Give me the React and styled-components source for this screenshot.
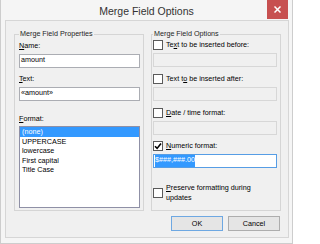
import React from 'react';
import styled, { createGlobalStyle } from 'styled-components';

const formats = ['(none)', 'UPPERCASE', 'lowercase', 'First capital', 'Title Case'];

const App = () => (
    <>
        <GlobalStyle />
        <Window>
            <TitleBar>
                <span />
                <Title>Merge Field Options</Title>
                <CloseButton aria-label="Close">
                    <svg width="7" height="7" viewBox="0 0 7 7">
                        <path d="M1 1 L6 6 M6 1 L1 6" stroke="#fff" strokeWidth="1.5" strokeLinecap="square" />
                    </svg>
                </CloseButton>
            </TitleBar>
            <Client>
                <Columns>
                    <Group $padLeft={4} $padRight={3}>
                        <Legend>Merge Field Properties</Legend>
                        <Stack>
                            <FieldLabel $top={3}><u>N</u>ame:</FieldLabel>
                            <TextBox $top={4}>amount</TextBox>
                            <FieldLabel $top={6}><u>T</u>ext:</FieldLabel>
                            <TextBox $top={4}>«amount»</TextBox>
                            <FieldLabel $top={13}><u>F</u>ormat:</FieldLabel>
                            <ListBox>
                                {formats.map((item, i) => (
                                    <ListItem key={item} $selected={i === 0}>{item}</ListItem>
                                ))}
                            </ListBox>
                        </Stack>
                    </Group>
                    <Group $padLeft={1} $padRight={3}>
                        <Legend>Merge Field Options</Legend>
                        <Stack>
                            <CheckRow $top={2}>
                                <CheckBox />
                                <span>Te<u>x</u>t to be inserted before:</span>
                            </CheckRow>
                            <TextBox $top={3} $disabled />
                            <CheckRow $top={7}>
                                <CheckBox />
                                <span>Text t<u>o</u> be inserted after:</span>
                            </CheckRow>
                            <TextBox $top={3} $disabled />
                            <CheckRow $top={7}>
                                <CheckBox />
                                <span><u>D</u>ate / time format:</span>
                            </CheckRow>
                            <TextBox $top={3} $disabled />
                            <CheckRow $top={6}>
                                <CheckBox>
                                    <svg width="8" height="8" viewBox="0 0 8 8">
                                        <path d="M1 4.2 L3.1 6.4 L7 1.4" fill="none" stroke="#000" strokeWidth="1.6" />
                                    </svg>
                                </CheckBox>
                                <span><u>N</u>umeric format:</span>
                            </CheckRow>
                            <TextBox $top={3} $focused>
                                <Selection>$###,###.00</Selection>
                            </TextBox>
                            <CheckRow $top={15}>
                                <CheckBox />
                                <WrapLabel><u>P</u>reserve formatting during<br />updates</WrapLabel>
                            </CheckRow>
                        </Stack>
                    </Group>
                </Columns>
                <Buttons>
                    <Button $default>OK</Button>
                    <Button>Cancel</Button>
                </Buttons>
            </Client>
        </Window>
    </>
);

export default App;

// Styled components
const GlobalStyle = createGlobalStyle`
    html, body {
        margin: 0;
        padding: 0;
        background: #ffffff;
    }
    body {
        font-family: "Liberation Sans", Arial, sans-serif;
    }
    u {
        text-decoration-thickness: 1px;
        text-underline-offset: 1px;
    }
`;

const Window = styled.div`
    box-sizing: border-box;
    width: 293px;
    height: 244px;
    background: #f5f5f5;
    border: 1px solid #cdcdcd;
    border-top: none;
    display: flex;
    flex-direction: column;
`;

const TitleBar = styled.div`
    height: 20px;
    display: grid;
    grid-template-columns: 1fr auto 1fr;
    align-items: start;
`;

const Title = styled.span`
    padding-top: 4px;
    font-size: 10.5px;
    line-height: 14px;
    color: #333333;
`;

const CloseButton = styled.div`
    justify-self: end;
    width: 21px;
    height: 19px;
    margin-right: 4px;
    background: #c75050;
    display: flex;
    align-items: center;
    justify-content: center;
`;

const Client = styled.div`
    box-sizing: border-box;
    margin: 0 3px 0 4px;
    height: 218px;
    background: #f0f0f0;
    border: 1px solid #d6d6d6;
    padding: 9px 7px 0 8px;
    font-size: 7.2px;
    color: #000000;
`;

const Columns = styled.div`
    display: grid;
    grid-template-columns: 1fr 1fr;
    gap: 7px;
`;

const Group = styled.fieldset`
    box-sizing: border-box;
    min-width: 0;
    margin: 0;
    height: 181px;
    padding: 0 ${p => p.$padRight}px 2px ${p => p.$padLeft}px;
    border: 1px solid #d5d5d5;
`;

const Legend = styled.legend`
    padding: 0 1px;
    font-size: 7.2px;
    line-height: 8px;
    color: #1e1e1e;
`;

const Stack = styled.div`
    display: flex;
    flex-direction: column;
`;

const FieldLabel = styled.div`
    margin-top: ${p => p.$top}px;
    line-height: 9px;
`;

const TextBox = styled.div`
    box-sizing: border-box;
    margin-top: ${p => p.$top}px;
    height: 14px;
    padding: 0 1px;
    display: flex;
    align-items: flex-start;
    line-height: 10px;
    white-space: nowrap;
    background: ${p => (p.$disabled ? '#f0f0f0' : '#ffffff')};
    border: 1px solid ${p => (p.$disabled ? '#d7d7d7' : p.$focused ? '#569de5' : '#abadb3')};
`;

const Selection = styled.span`
    display: block;
    padding-bottom: 2px;
    background: #3399ff;
    color: #ffffff;
`;

const ListBox = styled.div`
    box-sizing: border-box;
    margin-top: 3px;
    height: 82px;
    background: #ffffff;
    border: 1px solid #8f90a6;
`;

const ListItem = styled.div`
    padding-left: 2px;
    line-height: 9.5px;
    background: ${p => (p.$selected ? '#3399ff' : 'transparent')};
    color: ${p => (p.$selected ? '#ffffff' : '#000000')};
`;

const CheckRow = styled.div`
    margin-top: ${p => p.$top}px;
    display: flex;
    align-items: center;
    gap: 3px;
    line-height: 10px;
    white-space: nowrap;
`;

const CheckBox = styled.span`
    box-sizing: border-box;
    flex: none;
    width: 10px;
    height: 10px;
    background: #ffffff;
    border: 1px solid #5a5a5a;
    display: flex;
    align-items: center;
    justify-content: center;
`;

const WrapLabel = styled.span`
    line-height: 9.5px;
`;

const Buttons = styled.div`
    margin-top: 5px;
    padding-right: 1px;
    display: flex;
    justify-content: flex-end;
    gap: 5px;
`;

const Button = styled.button`
    box-sizing: border-box;
    width: 52px;
    height: 15px;
    padding: 0;
    font-family: "Liberation Sans", Arial, sans-serif;
    font-size: 7.2px;
    line-height: 13px;
    color: #000000;
    background: #e5e5e5;
    border: 1px solid ${p => (p.$default ? '#6ea8e2' : '#adadad')};
`;
